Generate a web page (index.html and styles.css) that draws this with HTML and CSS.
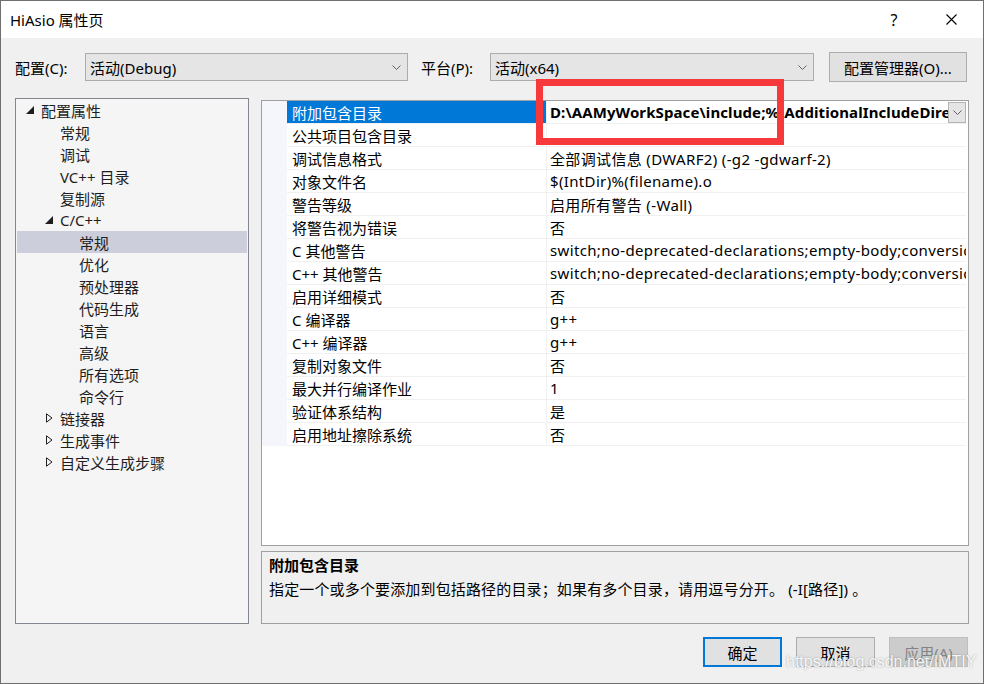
FILE: index.html
```html
<!DOCTYPE html>
<html>
<head>
    <meta charset="UTF-8">
    <title>HiAsio 属性页</title>
    <link rel="stylesheet" href="styles.css">
</head>
<body>
    <div class="window">
        <div class="titlebar">
            <span class="title">HiAsio 属性页</span>
            <span class="title-btn">?</span>
            <span class="title-btn close">
                <svg width="11" height="11" viewBox="0 0 11 11"><path d="M0.5 0.5L10.5 10.5M10.5 0.5L0.5 10.5" stroke="#000" stroke-width="1.1" fill="none"/></svg>
            </span>
        </div>

        <div class="content">
            <div class="toolbar">
                <span class="tb-label label-config">配置(C):</span>
                <div class="combo combo-config">
                    <span class="combo-text">活动(Debug)</span>
                    <svg width="9" height="5" viewBox="0 0 9 5"><path d="M0.5 0.5L4.5 4.5L8.5 0.5" fill="none" stroke="#606060"/></svg>
                </div>
                <span class="tb-label label-platform">平台(P):</span>
                <div class="combo combo-platform">
                    <span class="combo-text">活动(x64)</span>
                    <svg width="9" height="5" viewBox="0 0 9 5"><path d="M0.5 0.5L4.5 4.5L8.5 0.5" fill="none" stroke="#606060"/></svg>
                </div>
                <button class="btn btn-manager">配置管理器(O)...</button>
            </div>

            <div class="main">
                <div class="tree">
                    <div class="tree-row lvl0"><span class="toggle"><svg width="8" height="8" viewBox="0 0 8 8"><path d="M8 0L8 8L0 8Z" fill="#1e1e1e"/></svg></span>配置属性</div>
                    <div class="tree-row lvl1"><span class="toggle"></span>常规</div>
                    <div class="tree-row lvl1"><span class="toggle"></span>调试</div>
                    <div class="tree-row lvl1"><span class="toggle"></span>VC++ 目录</div>
                    <div class="tree-row lvl1"><span class="toggle"></span>复制源</div>
                    <div class="tree-row lvl1"><span class="toggle"><svg width="8" height="8" viewBox="0 0 8 8"><path d="M8 0L8 8L0 8Z" fill="#1e1e1e"/></svg></span>C/C++</div>
                    <div class="tree-row lvl2 selected"><span class="toggle"></span>常规</div>
                    <div class="tree-row lvl2"><span class="toggle"></span>优化</div>
                    <div class="tree-row lvl2"><span class="toggle"></span>预处理器</div>
                    <div class="tree-row lvl2"><span class="toggle"></span>代码生成</div>
                    <div class="tree-row lvl2"><span class="toggle"></span>语言</div>
                    <div class="tree-row lvl2"><span class="toggle"></span>高级</div>
                    <div class="tree-row lvl2"><span class="toggle"></span>所有选项</div>
                    <div class="tree-row lvl2"><span class="toggle"></span>命令行</div>
                    <div class="tree-row lvl1"><span class="toggle"><svg width="8" height="10" viewBox="0 0 8 10"><path d="M1.5 0.8L7 5L1.5 9.2Z" fill="none" stroke="#1e1e1e"/></svg></span>链接器</div>
                    <div class="tree-row lvl1"><span class="toggle"><svg width="8" height="10" viewBox="0 0 8 10"><path d="M1.5 0.8L7 5L1.5 9.2Z" fill="none" stroke="#1e1e1e"/></svg></span>生成事件</div>
                    <div class="tree-row lvl1"><span class="toggle"><svg width="8" height="10" viewBox="0 0 8 10"><path d="M1.5 0.8L7 5L1.5 9.2Z" fill="none" stroke="#1e1e1e"/></svg></span>自定义生成步骤</div>
                </div>

                <div class="right">
                    <div class="grid">
                        <div class="prop-row active">
                            <div class="gutter"></div>
                            <div class="prop-name">附加包含目录</div>
                            <div class="prop-value">
                                <span class="value-text">D:\AAMyWorkSpace\include;%(AdditionalIncludeDirectories)</span>
                                <span class="dd-btn"><svg width="9" height="5" viewBox="0 0 9 5"><path d="M0.5 0.5L4.5 4.5L8.5 0.5" fill="none" stroke="#606060"/></svg></span>
                            </div>
                        </div>
                        <div class="prop-row"><div class="gutter"></div><div class="prop-name">公共项目包含目录</div><div class="prop-value"></div></div>
                        <div class="prop-row"><div class="gutter"></div><div class="prop-name">调试信息格式</div><div class="prop-value">全部调试信息 (DWARF2) (-g2 -gdwarf-2)</div></div>
                        <div class="prop-row"><div class="gutter"></div><div class="prop-name">对象文件名</div><div class="prop-value">$(IntDir)%(filename).o</div></div>
                        <div class="prop-row"><div class="gutter"></div><div class="prop-name">警告等级</div><div class="prop-value">启用所有警告 (-Wall)</div></div>
                        <div class="prop-row"><div class="gutter"></div><div class="prop-name">将警告视为错误</div><div class="prop-value">否</div></div>
                        <div class="prop-row"><div class="gutter"></div><div class="prop-name">C 其他警告</div><div class="prop-value">switch;no-deprecated-declarations;empty-body;conversion;return-type</div></div>
                        <div class="prop-row"><div class="gutter"></div><div class="prop-name">C++ 其他警告</div><div class="prop-value">switch;no-deprecated-declarations;empty-body;conversion;return-type</div></div>
                        <div class="prop-row"><div class="gutter"></div><div class="prop-name">启用详细模式</div><div class="prop-value">否</div></div>
                        <div class="prop-row"><div class="gutter"></div><div class="prop-name">C 编译器</div><div class="prop-value">g++</div></div>
                        <div class="prop-row"><div class="gutter"></div><div class="prop-name">C++ 编译器</div><div class="prop-value">g++</div></div>
                        <div class="prop-row"><div class="gutter"></div><div class="prop-name">复制对象文件</div><div class="prop-value">否</div></div>
                        <div class="prop-row"><div class="gutter"></div><div class="prop-name">最大并行编译作业</div><div class="prop-value">1</div></div>
                        <div class="prop-row"><div class="gutter"></div><div class="prop-name">验证体系结构</div><div class="prop-value">是</div></div>
                        <div class="prop-row"><div class="gutter"></div><div class="prop-name">启用地址擦除系统</div><div class="prop-value">否</div></div>
                    </div>

                    <div class="desc">
                        <div class="desc-title">附加包含目录</div>
                        <div class="desc-text">指定一个或多个要添加到包括路径的目录；如果有多个目录，请用逗号分开。 (-I[路径]) 。</div>
                    </div>
                </div>
            </div>

            <div class="footer">
                <button class="btn btn-ok">确定</button>
                <button class="btn">取消</button>
                <button class="btn btn-disabled">应用(A)</button>
            </div>
        </div>

        <div class="watermark">https://blog.csdn.net/IMTIY</div>
        <div class="annotation"></div>
    </div>
</body>
</html>
```

FILE: styles.css
```css
body {
    margin: 0;
    font-family: "Noto Sans", "Noto Sans CJK SC", sans-serif;
    font-size: 15px;
    color: #000;
}

.window {
    position: relative;
    width: 984px;
    height: 684px;
    box-sizing: border-box;
    border: 1px solid #6f6f6f;
    background: #f0f0f0;
    overflow: hidden;
}

/* title bar */
.titlebar {
    height: 37px;
    background: #fff;
    display: flex;
    align-items: center;
    padding-left: 9px;
}

.title {
    flex: 1;
}

.title-btn {
    width: 46px;
    height: 37px;
    display: flex;
    align-items: center;
    justify-content: center;
    font-size: 16px;
}

.title-btn.close {
    margin-left: 11px;
    margin-right: 9px;
}

.content {
    padding: 0 14px;
}

/* config / platform row */
.toolbar {
    display: flex;
    align-items: center;
    height: 30px;
    margin-top: 14px;
}

.tb-label {
    flex-shrink: 0;
}

.label-config {
    width: 70px;
}

.label-platform {
    width: 69px;
    margin-left: 13px;
}

.combo {
    height: 28px;
    box-sizing: border-box;
    border: 1px solid #acacac;
    background: #e5e5e5;
    display: flex;
    align-items: center;
    padding: 0 6px 0 4px;
}

.combo-text {
    flex: 1;
}

.combo-config {
    width: 323px;
}

.combo-platform {
    width: 324px;
}

.btn {
    font-family: inherit;
    font-size: 15px;
    color: #000;
    background: #e1e1e1;
    border: 1px solid #adadad;
    height: 30px;
    width: 79px;
    padding: 0;
    box-sizing: border-box;
}

.btn-manager {
    width: 138px;
    margin-left: 15px;
}

/* main area */
.main {
    display: flex;
    margin-top: 16px;
    height: 526px;
}

.tree {
    width: 234px;
    box-sizing: border-box;
    border: 1px solid #828790;
    background: #f5f5f5;
    padding: 0 1px;
    color: #1e1e1e;
}

.tree-row {
    height: 22px;
    display: flex;
    align-items: center;
    white-space: nowrap;
}

.tree-row .toggle {
    width: 15px;
    display: flex;
    align-items: center;
}

.lvl0 { padding-left: 9px; }
.lvl1 { padding-left: 28px; }
.lvl2 { padding-left: 47px; }

.tree-row.selected {
    background: #cccedb;
}

.right {
    width: 708px;
    margin-left: 12px;
    display: flex;
    flex-direction: column;
}

.grid {
    margin-top: 2px;
    height: 446px;
    box-sizing: border-box;
    border: 1px solid #a0a0a0;
    background: #fff;
}

.prop-row {
    display: flex;
    height: 23px;
    margin-right: 2px;
}

.gutter {
    width: 25px;
    background: #f4f6fb;
}

.prop-name,
.prop-value {
    box-sizing: border-box;
    border-bottom: 1px solid #f0f0f0;
    display: flex;
    align-items: center;
    white-space: nowrap;
    overflow: hidden;
}

.prop-name {
    width: 260px;
    padding-left: 5px;
    border-right: 1px solid #f0f0f0;
}

.prop-value {
    flex: 1;
    padding-left: 3px;
    letter-spacing: 0.35px;
}

.active .prop-name {
    background: #0078d7;
    color: #fff;
}

.active .prop-value {
    font-weight: bold;
    letter-spacing: 0.1px;
}

.value-text {
    flex: 1;
    overflow: hidden;
    white-space: nowrap;
}

.dd-btn {
    width: 18px;
    height: 21px;
    box-sizing: border-box;
    border: 1px solid #b4b4b4;
    background: #e5e5e5;
    display: flex;
    align-items: center;
    justify-content: center;
}

.desc {
    margin-top: 5px;
    height: 73px;
    box-sizing: border-box;
    border: 1px solid #a0a0a0;
    padding: 3px 7px;
}

.desc-title {
    font-weight: bold;
    line-height: 20px;
}

.desc-text {
    line-height: 20px;
    margin-top: 4px;
    white-space: nowrap;
    letter-spacing: 0.15px;
}

/* dialog buttons */
.footer {
    display: flex;
    justify-content: flex-end;
    gap: 14px;
    margin-top: 13px;
    margin-right: 1px;
}

.btn-ok {
    border: 2px solid #0078d7;
}

.btn-disabled {
    background: #cccccc;
    border-color: #bfbfbf;
    color: #838383;
}

/* overlays */
.watermark {
    position: absolute;
    left: 785px;
    top: 652px;
    font-family: "Liberation Sans", sans-serif;
    font-size: 16px;
    color: rgba(255, 255, 255, 0.92);
    text-shadow: 0 0 2px rgba(0, 0, 0, 0.35);
}

.annotation {
    position: absolute;
    left: 535px;
    top: 78px;
    width: 248px;
    height: 66px;
    box-sizing: border-box;
    border: 7px solid #f8393b;
}
```
